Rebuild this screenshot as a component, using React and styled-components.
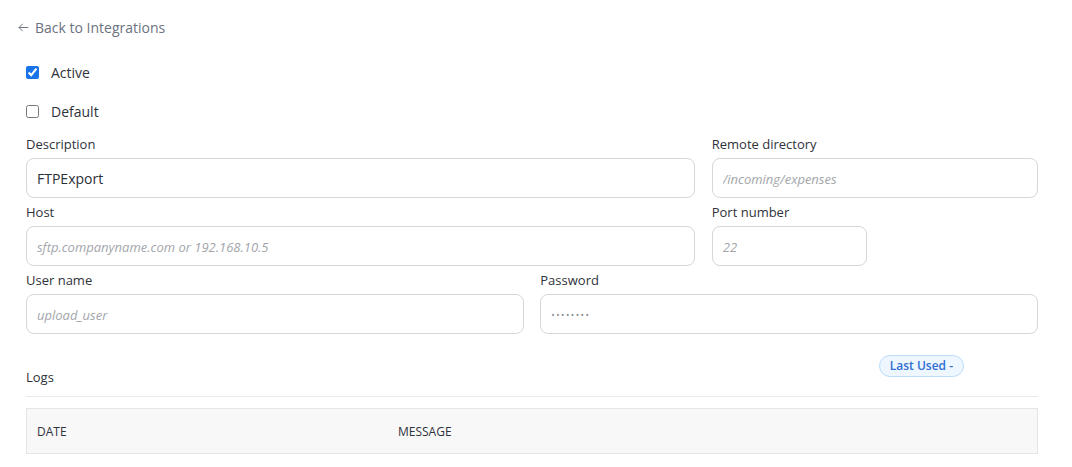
import React, { useState } from "react";
import styled, { createGlobalStyle } from "styled-components";

const GlobalStyle = createGlobalStyle`
  body {
    margin: 0;
    background: #ffffff;
    font-family: "Open Sans", "Noto Sans", sans-serif;
    color: #2f333a;
  }
`;

const Page = styled.div`
  padding: 17px 34px 0 26px;
`;

const BackLink = styled.a`
  display: inline-flex;
  align-items: center;
  gap: 5px;
  margin-left: -9px;
  font-size: 14px;
  color: #6b7280;
  text-decoration: none;
  cursor: pointer;
  height: 20px;

  svg {
    width: 13px;
    height: 13px;
  }
`;

const Checks = styled.div`
  display: flex;
  flex-direction: column;
  gap: 19px;
  margin-top: 23px;
`;

const CheckRow = styled.label`
  display: flex;
  align-items: center;
  gap: 12px;
  font-size: 14px;
  color: #2f333a;
  height: 20px;

  input {
    width: 13px;
    height: 13px;
    margin: 0;
    accent-color: #1a73e8;
  }
`;

const Grid = styled.div`
  display: grid;
  grid-template-columns: repeat(12, 1fr);
  column-gap: 16.6px;
  row-gap: 7px;
  margin-top: 16px;
`;

const Field = styled.div`
  grid-column: span ${(p) => p.span};
  display: flex;
  flex-direction: column;
  gap: 7px;
`;

const Label = styled.span`
  font-size: 13px;
  line-height: 14px;
  color: #2f333a;
`;

const Input = styled.input`
  box-sizing: border-box;
  width: 100%;
  height: 40px;
  padding: 0 10px;
  border: 1px solid #d6d6d6;
  border-radius: 8px;
  font-family: inherit;
  font-size: 14px;
  color: #2b2f36;
  background: #fff;
  outline: none;

  &::placeholder {
    font-style: italic;
    font-size: 13px;
    color: #a3a6ab;
  }

  &[type="password"] {
    font-size: 9px;
    letter-spacing: 1.5px;
    color: #8a8d92;
  }
`;

const LogsHead = styled.div`
  display: flex;
  align-items: flex-start;
  justify-content: space-between;
  margin-top: 21px;
  height: 41px;
  border-bottom: 1px solid #e8e9eb;
`;

const LogsTitle = styled.span`
  font-size: 13px;
  margin-top: 13px;
  color: #2f333a;
`;

const Badge = styled.span`
  margin-right: 74px;
  padding: 3px 10px;
  border: 1px solid #bcdcfb;
  border-radius: 11px;
  background: #eef6ff;
  color: #2f6fd0;
  font-size: 12px;
  font-weight: 600;
  line-height: 14px;
`;

const Table = styled.div`
  margin-top: 11px;
  border: 1px solid #e4e5e7;
  background: #f8f8f8;
`;

const HeadRow = styled.div`
  display: grid;
  grid-template-columns: 361px 1fr;
  height: 44px;
  align-items: center;
`;

const HeadCell = styled.span`
  padding-left: 10px;
  font-size: 12px;
  color: #2f333a;
`;

const ArrowLeft = () => (
  <svg viewBox="0 0 16 16" fill="none" stroke="currentColor" strokeWidth="1.2">
    <path d="M14 8H2.5M7 3.5 2.5 8 7 12.5" />
  </svg>
);

export default function App() {
  const [active, setActive] = useState(true);
  const [isDefault, setIsDefault] = useState(false);
  const [desc, setDesc] = useState("FTPExport");

  return (
    <Page>
      <GlobalStyle />
      <BackLink>
        <ArrowLeft />
        Back to Integrations
      </BackLink>

      <Checks>
        <CheckRow>
          <input type="checkbox" checked={active} onChange={() => setActive(!active)} />
          Active
        </CheckRow>
        <CheckRow>
          <input type="checkbox" checked={isDefault} onChange={() => setIsDefault(!isDefault)} />
          Default
        </CheckRow>
      </Checks>

      <Grid>
        <Field span={8}>
          <Label>Description</Label>
          <Input value={desc} onChange={(e) => setDesc(e.target.value)} />
        </Field>
        <Field span={4}>
          <Label>Remote directory</Label>
          <Input placeholder="/incoming/expenses" />
        </Field>
        <Field span={8}>
          <Label>Host</Label>
          <Input placeholder="sftp.companyname.com or 192.168.10.5" />
        </Field>
        <Field span={2}>
          <Label>Port number</Label>
          <Input placeholder="22" />
        </Field>
        <Field span={2} />
        <Field span={6}>
          <Label>User name</Label>
          <Input placeholder="upload_user" />
        </Field>
        <Field span={6}>
          <Label>Password</Label>
          <Input type="password" defaultValue="secret12" />
        </Field>
      </Grid>

      <LogsHead>
        <LogsTitle>Logs</LogsTitle>
        <Badge>Last Used -</Badge>
      </LogsHead>

      <Table>
        <HeadRow>
          <HeadCell>DATE</HeadCell>
          <HeadCell>MESSAGE</HeadCell>
        </HeadRow>
      </Table>
    </Page>
  );
}
